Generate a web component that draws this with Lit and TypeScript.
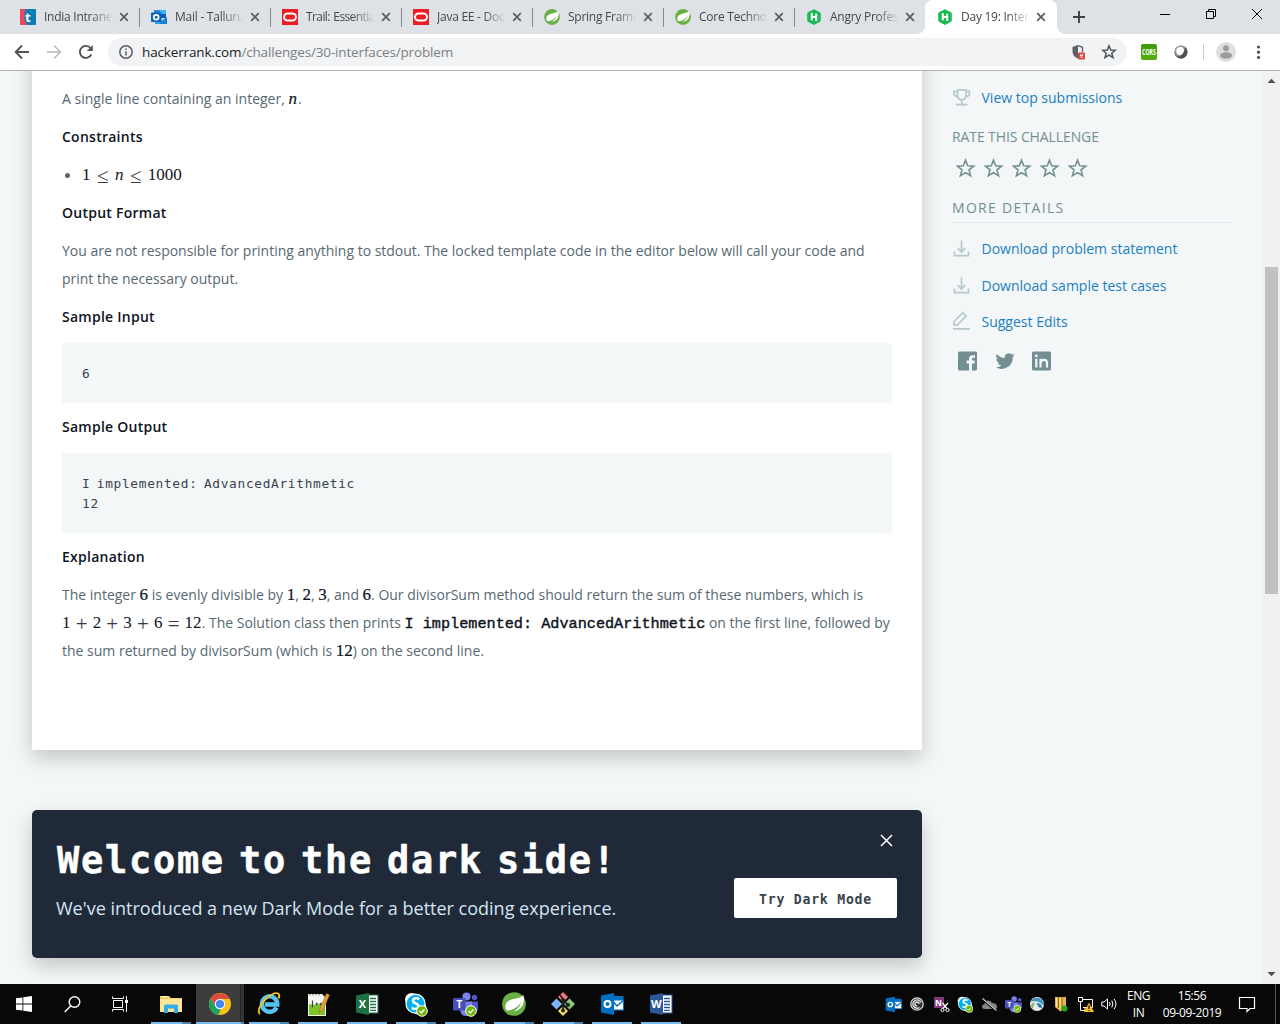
import { LitElement, html, css } from "lit";
import { customElement } from "lit/decorators.js";
import { classMap } from "lit/directives/class-map.js";

const oracle = html`<svg width="16" height="16" viewBox="0 0 16 16"><rect width="16" height="16" fill="#ee1c24"/><rect x="2" y="4.5" width="12" height="7" rx="3.5" fill="none" stroke="#fff" stroke-width="2"/></svg>`;
const spring = (s: number) => html`<svg width=${s} height=${s} viewBox="0 0 16 16"><circle cx="8" cy="8" r="7.9" fill="#68b044"/><path d="M14.2 1.8C13.4 3.6 9.5 4.2 6.4 5 3.300 5.9 1.600 8.200 2.500 11.100 3.100 12.800 4.600 13 6.600 13 11.500 12.900 16 9.500 14.200 1.800Z" fill="#fff"/><path d="M1.900 12.700C6.500 12.300 10.500 10.500 13 6.300 11.300 11.300 7.500 13.900 3.300 13.900Z" fill="#68b044"/></svg>`;
const hacker = html`<svg width="16" height="16" viewBox="0 0 16 16"><path d="M8 .2 14 3.300Q14.800 4 14.800 5V11Q14.800 12 14 12.700L8 15.900 2 12.700Q1.200 12 1.200 11V5Q1.200 4 2 3.300Z" fill="#1db954"/><path d="M5.800 4V11.200M10.200 4.800V12M5.800 8H10.200" stroke="#fff" stroke-width="2"/></svg>`;
const outlookNew = html`<svg width="16" height="16" viewBox="0 0 16 16"><path d="M3 1H15V9H3Z" fill="#0a5cb8"/><path d="M3 1H9V5H3Z" fill="#2089d8"/><path d="M9 1H15V5H9Z" fill="#35b8f1"/><path d="M4 9 10 12 16 8V15H4Z" fill="#2aa7e8"/><path d="M16 8 8 15H16Z" fill="#1683d0"/><rect y="3.500" width="10.500" height="9.500" rx="1" fill="#0f61ba"/><circle cx="5.200" cy="8.200" r="2.400" fill="none" stroke="#fff" stroke-width="1.700"/></svg>`;
const intranet = html`<svg width="16" height="16" viewBox="0 0 16 16"><rect width="16" height="16" rx="1" fill="#0c7db3"/><path d="M1 0H6L4.500 3V11L7 16H1Q0 16 0 15V1Q0 0 1 0Z" fill="#ef4660"/><text x="5" y="12.500" font-size="13" font-weight="700" fill="#fff" font-family="Open Sans,sans-serif">t</text></svg>`;

const tabs = [
  { icon: intranet, title: "India Intrane" },
  { icon: outlookNew, title: "Mail - Talluru" },
  { icon: oracle, title: "Trail: Essentia", tight: true },
  { icon: oracle, title: "Java EE - Doc" },
  { icon: spring(16), title: "Spring Frame" },
  { icon: spring(16), title: "Core Technol" },
  { icon: hacker, title: "Angry Profes" },
  { icon: hacker, title: "Day 19: Inter" },
];

const cross = html`<svg width="10" height="10" viewBox="0 0 10 10"><path d="M1.200 1.200 8.800 8.800M8.800 1.200 1.200 8.800" stroke="#5a5d61" stroke-width="1.700"/></svg>`;

@customElement("browser-bar")
class BrowserBar extends LitElement {
  static styles = css`
    :host { display: block; height: 71px; font-family: "Open Sans", sans-serif; }
    .strip { display: flex; height: 34px; background: #dee1e6; padding-left: 8px; box-sizing: border-box; }
    .tab { width: 131px; height: 34px; box-sizing: border-box; display: flex; align-items: center; padding-left: 12px; position: relative; flex: none; }
    .tab svg { flex: none; display: block; }
    .rule::after { content: ""; position: absolute; right: -1px; top: 8px; width: 1px; height: 19px; background: #85888c; }
    .active { background: #fff; border-radius: 8px 8px 0 0; width: 132px; }
    .active::before, .active::after { content: ""; position: absolute; bottom: 0; width: 8px; height: 8px; }
    .active::before { left: -8px; background: radial-gradient(circle at 0 0, #dee1e6 7.500px, #fff 8px); }
    .active::after { right: -8px; background: radial-gradient(circle at 100% 0, #dee1e6 7.500px, #fff 8px); }
    .title { width: 67px; margin-left: 8px; margin-right: 8px; white-space: nowrap; font-size: 12px; letter-spacing: -0.250px; line-height: 20px; color: #45484c; mask-image: linear-gradient(90deg, #000 46px, transparent 70px); -webkit-mask-image: linear-gradient(90deg, #000 46px, transparent 70px); }
    .tight { letter-spacing: -0.600px; word-spacing: 1px; }
    .plus { margin: 11px 0 0 16px; }
    .wins { margin-left: auto; display: flex; gap: 34px; padding: 8px 17px 0 0; }
    .bar { display: flex; align-items: center; height: 37px; box-sizing: border-box; background: #fff; border-bottom: 1px solid #b2b4b6; padding-left: 14px; }
    .bar svg { display: block; flex: none; }
    .nav { display: flex; gap: 16px; }
    .omni { margin-left: 14px; width: 1019px; height: 28px; box-sizing: border-box; border-radius: 14px; background: #f1f3f4; display: flex; align-items: center; padding: 0 10px; flex: none; }
    .url { margin-left: 8px; font-size: 13.500px; color: #7b7f84; letter-spacing: -0.150px; flex: 1; white-space: nowrap; }
    .host { color: #202124; }
    .gap { width: 15px; }
    .cors { margin-left: 14px; width: 16px; height: 16px; border-radius: 2px; background: linear-gradient(#3f9a0c, #57ae0c); }
    .ring { margin-left: 16px; }
    .line { width: 1px; height: 16px; background: #c9cbce; margin-left: 14px; }
    .face { margin-left: 12px; }
    .dots { margin-left: 20px; }
  `;
  render() {
    return html`
      <div class="strip">
        ${tabs.map((t, i) => html`<div class=${classMap({ tab: true, rule: i < 6, active: i === 7 })}>${t.icon}<span class=${classMap({ title: true, tight: !!t.tight })}>${t.title}</span>${cross}</div>`)}
        <svg class="plus" width="12" height="12" viewBox="0 0 12 12"><path d="M6 0V12M0 6H12" stroke="#3c4043" stroke-width="1.900"/></svg>
        <div class="wins">
          <svg width="12" height="12" viewBox="0 0 12 12"><path d="M1 6.500H11" stroke="#000"/></svg>
          <svg width="12" height="12" viewBox="0 0 12 12"><path d="M1.500 3.500H8.500V10.500H1.500ZM3.500 3.500V1.500H10.500V8.500H8.500" stroke="#000" fill="none"/></svg>
          <svg width="12" height="12" viewBox="0 0 12 12"><path d="M1 1 11 11M11 1 1 11" stroke="#000"/></svg>
        </div>
      </div>
      <div class="bar">
        <div class="nav">
          <svg width="16" height="16" viewBox="0 0 16 16"><path d="M15 8H2M8 1.500 1.700 8 8 14.500" stroke="#505357" stroke-width="1.900" fill="none"/></svg>
          <svg width="16" height="16" viewBox="0 0 16 16"><path d="M1 8H14M8 1.500 14.300 8 8 14.500" stroke="#b9bbbe" stroke-width="1.700" fill="none"/></svg>
          <svg width="16" height="16" viewBox="0 0 16 16"><path d="M13.300 10.500A6 6 0 1 1 12.500 4" stroke="#505357" stroke-width="1.900" fill="none"/><path d="M14.800 1V7H8.800Z" fill="#505357"/></svg>
        </div>
        <div class="omni">
          <svg width="16" height="16" viewBox="0 0 16 16"><circle cx="8" cy="8" r="6.200" stroke="#5a5d61" stroke-width="1.500" fill="none"/><path d="M8 7.200V11.500M8 4.500V6" stroke="#5a5d61" stroke-width="1.500"/></svg>
          <span class="url"><span class="host">hackerrank.com</span>/challenges/30-interfaces/problem</span>
          <svg width="16" height="18" viewBox="0 0 16 18"><path d="M8 2 2.500 4V8.500C2.500 12 5 14.500 8 15.500Z" fill="#5f6368"/><path d="M8 2.700 12.500 4.300V9" fill="none" stroke="#5f6368" stroke-width="1.400"/><rect x="8" y="9.500" width="7" height="7" rx="1" fill="#db4437"/><path d="M10 11.500 13 14.500M13 11.500 10 14.500" stroke="#fff" stroke-width="1.100"/></svg>
          <span class="gap"></span>
          <svg width="16" height="16" viewBox="0 0 16 16"><path d="M8 1.800 9.700 6 14.300 6.300 10.800 9.200 12 13.700 8 11.200 4 13.700 5.200 9.200 1.700 6.300 6.300 6Z" fill="none" stroke="#505357" stroke-width="1.500"/></svg>
        </div>
        <svg class="cors" viewBox="0 0 16 16"><g transform="translate(8 11) scale(.66 1)"><text text-anchor="middle" font-size="8" font-weight="700" fill="#fff" font-family="Open Sans,sans-serif">CORS</text></g></svg>
        <svg class="ring" width="16" height="16" viewBox="0 0 16 16"><circle cx="8" cy="8" r="6.600" fill="#686868"/><circle cx="7.500" cy="7.200" r="5.600" fill="#a2a2a2"/><circle cx="7.200" cy="7" r="3.900" fill="#fafafa"/><path d="M12 3.200A6 6 0 0 1 4 13Q11 12 12 3.200" fill="#505050"/></svg>
        <span class="line"></span>
        <svg class="face" width="20" height="20" viewBox="0 0 20 20"><circle cx="10" cy="10" r="10" fill="#dfdfe0"/><circle cx="10" cy="6.200" r="3" fill="#9c9c9e"/><ellipse cx="10" cy="13.500" rx="6" ry="3.200" fill="#9c9c9e"/></svg>
        <svg class="dots" width="5" height="16" viewBox="0 0 5 16"><circle cx="2.500" cy="3" r="1.600" fill="#505357"/><circle cx="2.500" cy="8.200" r="1.600" fill="#505357"/><circle cx="2.500" cy="13.400" r="1.600" fill="#505357"/></svg>
      </div>`;
  }
}

@customElement("problem-page")
class ProblemPage extends LitElement {
  static styles = css`
    :host { display: flex; height: 913px; overflow: hidden; background: #f3f7f7; font-family: "Open Sans", sans-serif; font-size: 14px; }
    .left { width: 890px; margin-left: 32px; flex: none; }
    .card { box-sizing: border-box; height: 719px; margin: -40px 0 60px; background: #fff; padding: 54px 30px 0; box-shadow: 0 8px 20px rgba(0, 0, 0, 0.2); color: #576871; display: flex; flex-direction: column; gap: 10px; line-height: 28px; white-space: nowrap; }
    .out { letter-spacing: -0.014px; }
    .h { font-weight: 600; color: #0e141e; letter-spacing: 0.250px; }
    .m { font-family: "Liberation Serif", serif; font-size: 17px; line-height: 20px; color: #0e141e; }
    .it { font-style: italic; }
    .b { -webkit-text-stroke: 0.200px #0e141e; }
    .n { padding-right: 1px; }
    .op { font-size: 21px; line-height: 16px; color: #333944; display: inline-block; height: 16px; vertical-align: -3px; }
    .eq { word-spacing: 0.900px; }
    .tt { font-family: "Liberation Mono", monospace; font-size: 15.200px; line-height: 20px; color: #0e141e; -webkit-text-stroke: 0.400px #0e141e; }
    .li { display: flex; align-items: center; gap: 12px; padding-left: 3px; height: 28px; }
    .dot { width: 5px; height: 5px; border-radius: 50%; background: #576871; }
    .cons { word-spacing: 2.200px; }
    .pre { margin: 2px 0 0; padding: 21px 20px 19px; background: #f3f7f7; line-height: 20px; color: #39424e; font-family: "DejaVu Sans Mono", monospace; font-size: 12.800px; letter-spacing: 0.690px; word-spacing: -2px; white-space: pre; }
    .banner { height: 148px; box-sizing: border-box; background: #1f2937; border-radius: 5px; box-shadow: 0 8px 20px rgba(0, 0, 0, 0.2); display: flex; justify-content: space-between; padding: 23px 25px 0 24px; }
    .title { font-family: "DejaVu Sans Mono", monospace; font-weight: 700; font-size: 37px; line-height: 56px; letter-spacing: 1.700px; word-spacing: -9.900px; padding-left: 1px; color: #fff; white-space: nowrap; -webkit-text-stroke: 0.500px #fff; }
    .sub { font-size: 18px; line-height: 28px; margin-top: 5px; color: #d3e4f3; white-space: nowrap; }
    .side-b { display: flex; flex-direction: column; align-items: flex-end; }
    .x { display: block; margin: 1px 4px 0 0; }
    .btn { margin-top: 31px; width: 163px; height: 40px; border-radius: 2px; background: #fff; display: flex; align-items: center; justify-content: center; font-family: "DejaVu Sans Mono", monospace; font-weight: 700; font-size: 13.200px; letter-spacing: 0.750px; color: #39424e; padding-top: 2px; box-sizing: border-box; }
    .side { width: 280px; margin-left: 30px; display: flex; flex-direction: column; align-items: stretch; flex: none; padding-top: 16px; box-sizing: border-box; }
    .link { display: flex; align-items: center; gap: 9.500px; height: 20px; color: #1b7fc2; white-space: nowrap; }
    .rate { margin-top: 21px; line-height: 18px; color: #738f93; letter-spacing: -0.100px; }
    .stars { display: flex; gap: 8px; margin: 12px 0 0 4px; }
    .more { margin-top: 20px; padding-bottom: 4px; line-height: 20px; border-bottom: 1px solid #e4eaec; color: #738f93; letter-spacing: 1.300px; }
    .l2 { margin-top: 15px; }
    .l3 { margin-top: 17px; }
    .l4 { margin-top: 16px; }
    .social { display: flex; gap: 17px; margin: 20px 0 0 6px; }
    svg { display: block; flex: none; }
    .scroll { width: 17px; margin-left: auto; background: #f1f1f1; display: flex; flex-direction: column; align-items: center; box-sizing: border-box; padding: 7px 0; }
    .thumb { width: 13px; height: 327px; background: #c1c1c1; }
    .fill { flex: 1; }
    .t1 { height: 184px; }
  `;
  render() {
    const m = (s: string) => html`<span class="m b">${s}</span>`;
    const op = (s: string) => html`<span class="op">${s}</span>`;
    const dl = html`<svg width="20" height="20" viewBox="0 0 20 20"><path d="M9.500 2.500V14M5.700 10.200 9.500 14 13.300 10.200M2.500 13.500V17.700H16.500V13.500" fill="none" stroke="#b7c9cc" stroke-width="1.700"/></svg>`;
    return html`
      <div class="left">
        <div class="card">
          <div>A single line containing an integer, <span class="m it b n">n</span>.</div>
          <div class="h">Constraints</div>
          <div class="li"><span class="dot"></span><span class="m cons">1 ${op("≤")} <span class="it">n</span> ${op("≤")} 1000</span></div>
          <div class="h">Output Format</div>
          <div class="out">You are not responsible for printing anything to stdout. The locked template code in the editor below will call your code and<br>print the necessary output.</div>
          <div class="h">Sample Input</div>
          <div class="pre">6</div>
          <div class="h">Sample Output</div>
          <div class="pre">I implemented: AdvancedArithmetic
12</div>
          <div class="h">Explanation</div>
          <div>The integer ${m("6")} is evenly divisible by ${m("1")}, ${m("2")}, ${m("3")}, and ${m("6")}. Our divisorSum method should return the sum of these numbers, which is<br><span class="m eq">1 ${op("+")} 2 ${op("+")} 3 ${op("+")} 6 ${op("=")} 12</span>. The Solution class then prints <span class="tt">I implemented: AdvancedArithmetic</span> on the first line, followed by<br>the sum returned by divisorSum (which is ${m("12")}) on the second line.</div>
        </div>
        <div class="banner">
          <div>
            <div class="title">Welcome to the dark side!</div>
            <div class="sub">We've introduced a new Dark Mode for a better coding experience.</div>
          </div>
          <div class="side-b">
            <svg class="x" width="13" height="13" viewBox="0 0 13 13"><path d="M1 1 12 12M12 1 1 12" stroke="#fff" stroke-width="1.500"/></svg>
            <div class="btn">Try Dark Mode</div>
          </div>
        </div>
      </div>
      <div class="side">
        <div class="link"><svg width="20" height="20" viewBox="0 0 20 20"><path d="M5.500 2.800H14V8.300Q14 12.800 9.750 12.800 5.500 12.800 5.500 8.300ZM5.500 4.300H2V6.800Q2 9.300 5.500 9.300M14 4.300H17.500V6.800Q17.500 9.300 14 9.300M9.750 12.800V17M4 17.700H15.500" fill="none" stroke="#b7c9cc" stroke-width="1.700"/></svg>View top submissions</div>
        <div class="rate">RATE THIS CHALLENGE</div>
        <div class="stars">${[1, 2, 3, 4, 5].map(() => html`<svg width="20" height="20" viewBox="0 0 20 20"><path d="M9.500 2.200 11.700 7.700 17.700 8.100 13 11.900 14.600 17.800 9.500 14.600 4.400 17.800 6 11.900 1.300 8.100 7.300 7.700Z" fill="none" stroke="#738f93" stroke-width="1.600"/></svg>`)}</div>
        <div class="more">MORE DETAILS</div>
        <div class="link l2">${dl}Download problem statement</div>
        <div class="link l3">${dl}Download sample test cases</div>
        <div class="link l4"><svg width="20" height="20" viewBox="0 0 20 20"><path d="M2 14V10.500L11 1.700 14.200 4.900 5.300 14ZM1 17.800H18" fill="none" stroke="#b7c9cc" stroke-width="1.700"/></svg>Suggest Edits</div>
        <div class="social">
          <svg width="20" height="20" viewBox="0 0 20 20"><path d="M1.500 .5H17.500Q19 .5 19 2V18Q19 19.500 17.500 19.500H14V12.500H16.400L16.800 9.500H14V8Q14 6.800 15.300 6.800H17V4.200H14.800Q11 4.200 11 7.700V9.500H8.600V12.500H11V19.500H1.500Q0 19.500 0 18V2Q0 .5 1.500 .5Z" fill="#738f93"/></svg>
          <svg width="20" height="20" viewBox="0 0 24 24"><path d="M23.500 4.900a9 9 0 0 1-2.700.8 4.700 4.700 0 0 0 2.100-2.600 9.400 9.400 0 0 1-3 1.100 4.700 4.700 0 0 0-8 4.300A13.300 13.300 0 0 1 2.200 3.600a4.700 4.700 0 0 0 1.500 6.300 4.700 4.700 0 0 1-2.100-.6 4.700 4.700 0 0 0 3.700 4.700 4.700 4.700 0 0 1-2.100.1 4.700 4.700 0 0 0 4.400 3.200A9.400 9.400 0 0 1 .7 19.300 13.300 13.300 0 0 0 21.200 7.400a9.500 9.500 0 0 0 2.300-2.500z" fill="#738f93"/></svg>
          <svg width="20" height="20" viewBox="0 0 20 20"><rect y=".5" width="19" height="19" rx="1.500" fill="#738f93"/><circle cx="4.300" cy="4.800" r="1.500" fill="#f3f7f7"/><path d="M4.300 7.700V16.500M8.500 7.700V16.500" stroke="#f3f7f7" stroke-width="2.200"/><path d="M8.800 12Q8.800 8.800 12 8.800 15 8.800 15 12V16.500" fill="none" stroke="#f3f7f7" stroke-width="2.200"/></svg>
        </div>
      </div>
      <div class="scroll">
        <svg width="9" height="5" viewBox="0 0 9 5"><path d="M.5 5 4.500 .8 8.500 5Z" fill="#505050"/></svg>
        <div class="t1"></div>
        <div class="thumb"></div>
        <div class="fill"></div>
        <svg width="9" height="5" viewBox="0 0 9 5"><path d="M.5 0 4.500 4.200 8.500 0Z" fill="#505050"/></svg>
      </div>`;
  }
}

const officeDoc = (c: string, dark: string, letter: string, body: unknown) => html`<svg width="24" height="24" viewBox="0 0 24 24"><rect x="12" y="3" width="11" height="18" fill="#fff" stroke=${c}/>${body}<path d="M1 3.500 14 1V23L1 20.500Z" fill=${dark}/><text x="7.300" y="16" text-anchor="middle" font-size="11" font-weight="700" fill="#fff" font-family="Open Sans,sans-serif">${letter}</text></svg>`;
const lines = (c: string) => html`<svg x="14" y="5" width="9" height="14"><path d="M1 1.500H7M1 4.500H7M1 7.500H7M1 10.500H7M1 13.500H7" stroke=${c} stroke-width="1.300"/></svg>`;
const check = html`<svg x="12" y="13" width="12" height="12" viewBox="0 0 12 12"><circle cx="6" cy="6" r="5.300" fill="#6bb700" stroke="#fff"/><path d="M3.500 6 5.300 8 8.500 4.300" fill="none" stroke="#fff" stroke-width="1.300"/></svg>`;
const skype = (s: number) => html`<svg width=${s} height=${s} viewBox="0 0 25 25"><circle cx="7.500" cy="7.500" r="6.500" fill="#fff"/><circle cx="15.500" cy="16" r="7" fill="#fff"/><circle cx="11.500" cy="11.700" r="9.500" fill="#00aff0" stroke="#fff" stroke-width="1.200"/><text x="11.500" y="18" text-anchor="middle" font-size="17" font-weight="700" fill="#fff" font-family="Open Sans,sans-serif">S</text>${check}</svg>`;
const teams = (s: number) => html`<svg width=${s} height=${s} viewBox="0 0 25 25"><circle cx="13.500" cy="4.500" r="4" fill="#7b83eb"/><circle cx="21.500" cy="5.500" r="2.700" fill="#5059c9"/><path d="M17 9.500H25V17Q24 21 20 21H17Z" fill="#5059c9"/><path d="M7 9.500H19V18Q18 24 13 24 8 24 7 18Z" fill="#7b83eb"/><rect x="0" y="6" width="12.500" height="12.500" rx="1" fill="#464eb8"/><text x="6.200" y="16" text-anchor="middle" font-size="10.500" font-weight="700" fill="#fff" font-family="Open Sans,sans-serif">T</text>${check}</svg>`;
const outlook = (s: number) => html`<svg width=${s} height=${s} viewBox="0 0 24 24"><rect x="11" y="4" width="12.500" height="5" fill="#0072c6"/><rect x="12.500" y="8" width="11" height="10" fill="#fff" stroke="#0072c6"/><path d="M12.500 9 17 14 23.500 8.500" fill="none" stroke="#0072c6" stroke-width="1.600"/><path d="M1 3.500 14 1V23L1 20.500Z" fill="#0072c6"/><circle cx="7.500" cy="12" r="3" fill="none" stroke="#fff" stroke-width="2"/></svg>`;

const apps = [
  { art: html`<svg width="24" height="24" viewBox="0 0 24 24"><path d="M1 4H10L12 6H23V20H1Z" fill="#f5cf69"/><path d="M1 7H23V20H1Z" fill="#ffe696"/><path d="M5 21V14Q5 12.500 6.500 12.500H17.500Q19 12.500 19 14V21H15V16.500H9V21Z" fill="#35aee8"/><path d="M3 4H8V5H3Z" fill="#fff"/></svg>`, many: true },
  { art: html`<svg width="24" height="24" viewBox="0 0 24 24"><circle cx="12" cy="12" r="11" fill="#fbc116"/><path d="M2.500 6.500A11 11 0 0 1 21.600 7H12A5 5 0 0 0 7.200 13.500Z" fill="#dd4b3e"/><path d="M2.500 6.500 7.700 14.500A5 5 0 0 0 12.800 17L10.500 22.900A11 11 0 0 1 2.500 6.500Z" fill="#1ea362"/><circle cx="12" cy="12" r="5.200" fill="#fff"/><circle cx="12" cy="12" r="4.100" fill="#4485f4"/></svg>`, many: true },
  { art: html`<svg width="24" height="24" viewBox="0 0 24 24"><path d="M19.500 15.500A7.700 7.700 0 1 1 20.300 12.500H8" fill="none" stroke="#55c4f3" stroke-width="4.400"/><path d="M3 22C-1 19 6 7 15 2.500 20 0 24 1 21.500 6.500" fill="none" stroke="#f6c51c" stroke-width="1.900"/></svg>`, many: true },
  { art: html`<svg width="24" height="25" viewBox="0 0 24 25"><path d="M2 2H16L20 6V24H2Z" fill="#f4f7ef"/><path d="M3 12Q10 14 19 11V23H3Z" fill="#7cc528"/><path d="M4 2V3.500M7 2V3.500M10 2V3.500M13 2V3.500" stroke="#777"/><path d="M6.500 8.500V15.500M9.500 12H12M13.500 12H16M10.700 10.800V13.200M14.700 10.800V13.200" stroke="#444" stroke-width="1.200"/><path d="M20.500 1.500 23.500 3 17 18 13.500 21 14 16.500Z" fill="#e8a33b" stroke="#9b6521" stroke-width=".6"/></svg>`, many: false },
  { art: officeDoc("#217346", "#1e7145", "X", lines("#217346")), many: false },
  { art: skype(25), many: true },
  { art: teams(25), many: false },
  { art: spring(24), many: true },
  { art: html`<svg width="24" height="24" viewBox="0 0 24 24"><path d="M12 0 17 5 12 10 7 5Z" fill="#f3787e"/><path d="M5.500 6.500 11 12 5.500 17.500 0 12Z" fill="#7fb3f5"/><path d="M18.500 6.500 24 12 18.500 17.500 13 12Z" fill="#8cc77c"/><path d="M12 14 17 19 12 24 7 19Z" fill="#fbdb67"/><path d="M9 3 12 7V18M12 8 17 13" stroke="#222" stroke-width="1.800" fill="none"/><circle cx="12" cy="18.500" r="2" fill="#222"/><circle cx="17" cy="13" r="2" fill="#222"/><circle cx="12" cy="8" r="2" fill="#222"/></svg>`, many: true },
  { art: outlook(24), many: false },
  { art: officeDoc("#2b579a", "#2b579a", "W", lines("#2b579a")), many: false },
];

const tray = [
  outlook(17),
  html`<svg width="16" height="16" viewBox="0 0 16 16"><circle cx="8" cy="8" r="6.200" fill="#333" stroke="#d8d8d8" stroke-width="1.300"/><path d="M12 6.500A4.200 4.200 0 1 0 10.500 11.500M10 8A2 2 0 1 0 8 10" fill="none" stroke="#e8e8e8" stroke-width="1.300"/></svg>`,
  html`<svg width="17" height="17" viewBox="0 0 17 17"><rect x="1" y="1" width="10" height="11" fill="#80397b"/><text x="2" y="9.500" font-size="8.500" font-weight="700" fill="#fff" font-family="Open Sans,sans-serif">N</text><path d="M9.500 7 14 12.500M15 7 10 12.500" stroke="#fff" stroke-width="1.300"/><circle cx="9.500" cy="14" r="1.600" fill="none" stroke="#fff"/><circle cx="14.500" cy="14" r="1.600" fill="none" stroke="#fff"/></svg>`,
  skype(17),
  html`<svg width="17" height="16" viewBox="0 0 17 16"><path d="M3.500 13Q1 13 1 10.500 1 8.500 3.500 8 4 4.500 7.500 4.500 10 4.500 11 7 16 7 16 10.500 16 13 13.500 13Z" fill="#858585"/><path d="M2 3.500 14.500 14.500" stroke="#000" stroke-width="2"/><path d="M1.500 2.500 15.500 14.500" stroke="#c8c8c8" stroke-width="1.200"/></svg>`,
  teams(17),
  html`<svg width="16" height="16" viewBox="0 0 16 16"><circle cx="8" cy="8" r="7" fill="#e8eef0"/><path d="M1.500 5.500Q6 -1 13 3.500 15.500 7 14.500 10 11 4 1.500 5.500" fill="#3c95c0"/><path d="M7 7.500Q12 6 13.500 11.500 11 12 9.500 11 9 8.500 7 7.500" fill="#2774a8"/><path d="M2 9Q4 6 6 7 4 9 4 13 2 11.500 2 9" fill="#81af62"/></svg>`,
  html`<svg width="16" height="17" viewBox="0 0 16 17"><path d="M2 1H13V11L7.500 15.500 2 11Z" fill="#e7b64d"/><path d="M5.500 1V12M9 1V14" stroke="#9b6b14" stroke-width="1"/><path d="M3.500 2V11M7.200 2V13" stroke="#ffe7a0" stroke-width="1"/><circle cx="11.500" cy="12.500" r="3" fill="#28a62c"/></svg>`,
  html`<svg width="17" height="17" viewBox="0 0 17 17"><path d="M6 3.500H15.500V11.500H6M1.500 1.500H5.500V5.500H1.500ZM3.500 6V14.500H9M8 11.500V14" fill="none" stroke="#fff"/><path d="M12 6.500 17 16H7Z" fill="#fcbd15"/><path d="M12 9.500V13M12 14V15" stroke="#000" stroke-width="1.200"/></svg>`,
  html`<svg width="17" height="16" viewBox="0 0 17 16"><path d="M.8 6H3L6.500 3V13L3 10H.8ZM8.500 6Q9.800 8 8.500 10M10.800 4.500Q13 8 10.800 11.500M13 2.800Q17 8 13 13.200" fill="none" stroke="#fff"/></svg>`,
];

@customElement("task-bar")
class TaskBar extends LitElement {
  static styles = css`
    :host { display: flex; height: 40px; background: #080808; color: #fff; font-family: "Open Sans", sans-serif; }
    svg { display: block; flex: none; }
    .sys { width: 48px; display: flex; align-items: center; justify-content: center; }
    .apps { display: flex; margin-left: 7px; }
    .app { width: 40px; margin-right: 9px; height: 40px; box-sizing: border-box; display: flex; align-items: center; justify-content: center; position: relative; }
    .app::after { content: ""; position: absolute; left: 0; right: 0; bottom: 0; height: 2px; background: #76b9ed; }
    .many::after { background: linear-gradient(90deg, #76b9ed 31px, #5084ab 31px); }
    .app.on { width: 48px; margin: 0 5px 0 -4px; background: linear-gradient(90deg, #3d3d3d 44px, #242424 44px, #242424 45px, #343434 45px); }
    .on::after { background: linear-gradient(90deg, #76b9ed 45px, #5084ab 45px); }
    .tray { display: flex; margin-left: auto; }
    .cell { width: 24px; display: flex; align-items: center; justify-content: center; }
    .txt { font-size: 12px; line-height: 17px; display: flex; flex-direction: column; align-items: center; justify-content: center; text-align: center; white-space: nowrap; letter-spacing: -0.400px; }
    .lang { width: 35px; }
    .clock { width: 72px; }
    .note { width: 38px; display: flex; align-items: center; justify-content: center; }
    .end { width: 4px; margin-left: 9px; border-left: 1px solid #555; }
  `;
  render() {
    return html`
      <div class="sys"><svg width="16" height="16" viewBox="0 0 16 16"><path d="M0 2.300 6.500 1.400V7.600H0ZM7.300 1.300 16 0V7.600H7.300ZM0 8.400H6.500V14.600L0 13.700ZM7.300 8.400H16V16L7.300 14.700Z" fill="#fff"/></svg></div>
      <div class="sys"><svg width="17" height="17" viewBox="0 0 17 17"><circle cx="10.500" cy="6" r="5.300" fill="none" stroke="#fff" stroke-width="1.400"/><path d="M6.700 10 .7 16" stroke="#fff" stroke-width="1.400"/></svg></div>
      <div class="sys"><svg width="17" height="16" viewBox="0 0 17 16"><path d="M1.500 4.500H10.500V11.500H1.500ZM.5 .5V2.500H11.500V.5M.5 15.500V13.500H11.500V15.500M14.500 0V16" fill="none" stroke="#fff"/><rect x="13" y="4" width="3" height="3" fill="#fff"/></svg></div>
      <div class="apps">${apps.map((a, i) => html`<div class=${classMap({ app: true, many: a.many, on: i === 1 })}>${a.art}</div>`)}</div>
      <div class="tray">
        ${tray.map((t) => html`<div class="cell">${t}</div>`)}
        <div class="txt lang"><span>ENG</span><span>IN</span></div>
        <div class="txt clock"><span>15:56</span><span>09-09-2019</span></div>
        <div class="note"><svg width="18" height="18" viewBox="0 0 18 18"><path d="M1.500 2.500H16.500V13.500H12L9 16.500V13.500H1.500Z" fill="none" stroke="#fff" stroke-width="1.200"/></svg></div>
        <div class="end"></div>
      </div>`;
  }
}

@customElement("app-root")
class AppRoot extends LitElement {
  static styles = css`
    :host { display: block; width: 1280px; height: 1024px; overflow: hidden; }
  `;
  render() {
    return html`<browser-bar></browser-bar><problem-page></problem-page><task-bar></task-bar>`;
  }
}
